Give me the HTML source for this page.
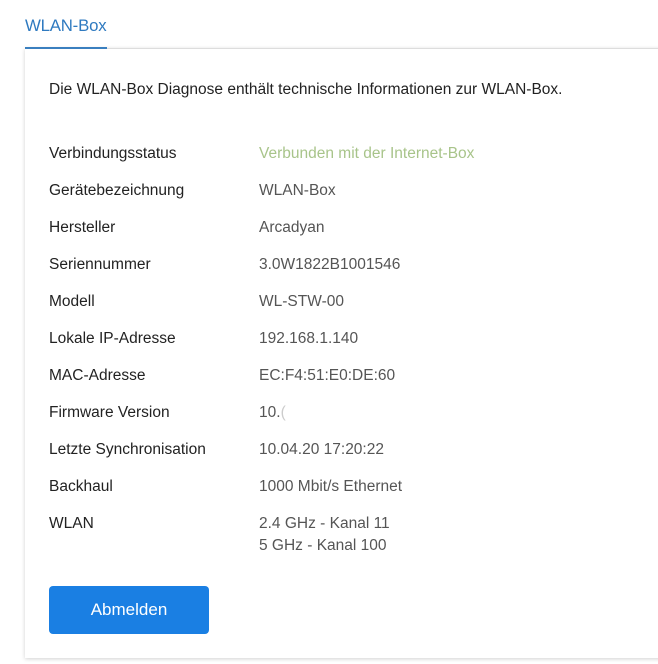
<!DOCTYPE html>
<html><head><meta charset="utf-8"><style>
body{margin:0;background:#fff;width:658px;height:664px;overflow:hidden;font-family:"Liberation Sans",sans-serif;position:relative}
.tab{position:absolute;left:25px;top:16px;font-size:16.8px;color:#2f7ac0;letter-spacing:-0.2px}
.ul{position:absolute;left:25px;top:47px;width:82px;height:2px;background:#3a7fbf}
.card{position:absolute;left:25px;top:48px;width:660px;height:609px;border-top:1px solid #ddd;box-shadow:0 1px 4px rgba(0,0,0,.18);background:#fff}
.intro{position:absolute;left:49px;top:81px;font-size:15.5px;color:#222}
.row{position:absolute;left:49px;font-size:15.5px;color:#222;margin-top:1px}
.v{position:absolute;left:259px;font-size:15.5px;color:#555;line-height:22px;margin-top:1px}
.btn{position:absolute;left:49px;top:586px;width:160px;height:48px;background:#1a7fe3;border-radius:4px;color:#fff;font-size:17px;text-align:center;line-height:48px}
</style></head><body>
<div class="card"></div>
<div class="tab">WLAN-Box</div><div class="ul"></div>
<div class="intro">Die WLAN-Box Diagnose enthält technische Informationen zur WLAN-Box.</div>
<div class="row" style="top:144px">Verbindungsstatus</div><div class="v" style="top:142px;color:#a8c48a">Verbunden mit der Internet-Box</div>
<div class="row" style="top:181px">Gerätebezeichnung</div><div class="v" style="top:179px">WLAN-Box</div>
<div class="row" style="top:218px">Hersteller</div><div class="v" style="top:216px">Arcadyan</div>
<div class="row" style="top:255px">Seriennummer</div><div class="v" style="top:253px">3.0W1822B1001546</div>
<div class="row" style="top:292px">Modell</div><div class="v" style="top:290px">WL-STW-00</div>
<div class="row" style="top:329px">Lokale IP-Adresse</div><div class="v" style="top:327px">192.168.1.140</div>
<div class="row" style="top:366px">MAC-Adresse</div><div class="v" style="top:364px">EC:F4:51:E0:DE:60</div>
<div class="row" style="top:403px">Firmware Version</div><div class="v" style="top:401px">10.<span style="color:#ccc">(</span></div>
<div class="row" style="top:440px">Letzte Synchronisation</div><div class="v" style="top:438px">10.04.20 17:20:22</div>
<div class="row" style="top:477px">Backhaul</div><div class="v" style="top:475px">1000 Mbit/s Ethernet</div>
<div class="row" style="top:514px">WLAN</div><div class="v" style="top:512px">2.4 GHz - Kanal 11<br>5 GHz - Kanal 100</div>
<div class="btn">Abmelden</div>
</body></html>
